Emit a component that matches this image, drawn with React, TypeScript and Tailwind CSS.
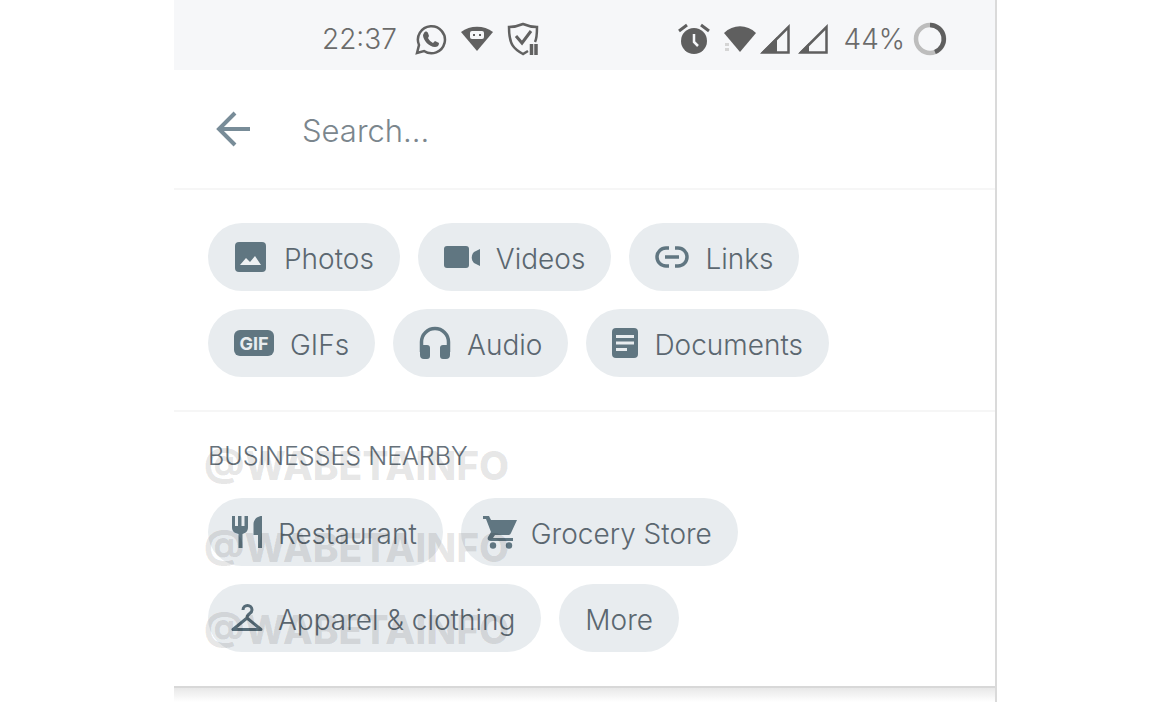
import type { ReactNode } from 'react';

function Chip({ label, icon, compact = false }: { label: string; icon?: ReactNode; compact?: boolean }) {
    return (
        <button
            type="button"
            className={`flex h-[68px] items-center rounded-full bg-[#e8ecef] pr-[26px] text-[28px] font-light whitespace-nowrap text-[#5b6770] ${compact ? 'gap-[14px] pl-[22px]' : 'gap-4 pl-[26px]'}`}
        >
            {icon}
            <span className="pt-[3px]">{label}</span>
        </button>
    );
}

function PhotoIcon() {
    return (
        <svg viewBox="0 0 34 32" className="h-8 w-[34px] shrink-0" fill="none">
            <rect x="1" y="1" width="31" height="30" rx="4" fill="#607681" />
            <path d="M6 24l6-7 4 4 5-6 6 9z" fill="#eef1f3" />
        </svg>
    );
}

function VideoIcon() {
    return (
        <svg viewBox="0 0 36 32" className="h-8 w-9 shrink-0" fill="#607681">
            <rect x="0" y="5" width="25" height="22" rx="3" />
            <path d="M36 8v17l-6-3c-3-3-3-8 0-11z" />
        </svg>
    );
}

function LinkIcon() {
    return (
        <svg viewBox="0 0 34 32" className="h-8 w-[34px] shrink-0" fill="none" stroke="#607681" strokeWidth="3.5">
            <path d="M14 7h-3a9 9 0 0 0 0 18h3M20 7h3a9 9 0 0 1 0 18h-3" />
            <path d="M10 16h14" />
        </svg>
    );
}

function GifIcon() {
    return (
        <span className="flex h-[26px] w-10 shrink-0 items-center justify-center rounded-md bg-[#607681] text-[18px] font-bold text-[#e8ecef]">
            GIF
        </span>
    );
}

function HeadphonesIcon() {
    return (
        <svg viewBox="0 0 32 34" className="h-[34px] w-8 shrink-0" fill="#607681">
            <path d="M2.500 26V16a13.500 13.500 0 0 1 27 0v10" fill="none" stroke="#607681" strokeWidth="3.5" />
            <path d="M1 19h7a3 3 0 0 1 3 3v8a3 3 0 0 1-3 3H5a4 4 0 0 1-4-4zM31 19h-7a3 3 0 0 0-3 3v8a3 3 0 0 0 3 3h3a4 4 0 0 0 4-4z" />
        </svg>
    );
}

function DocumentIcon() {
    return (
        <svg viewBox="0 0 26 32" className="h-8 w-[26px] shrink-0" fill="none">
            <rect x="0" y="1" width="26" height="30" rx="4" fill="#607681" />
            <path d="M4 9.500h18M4 16h18M4 22.500h11" stroke="#e8ecef" strokeWidth="3" />
        </svg>
    );
}

function RestaurantIcon() {
    return (
        <svg viewBox="-2 0 34 34" className="size-[34px] shrink-0" fill="#607681">
            <path d="M0 1h3v10h3V1h3.500v10h3V1H16v11c0 4-2 6-5.500 7v14H6.500V19C2 18 0 16 0 12z" />
            <path d="M30 1v32h-4V20h-4.500V9c0-4 3.500-8 8.500-8z" />
        </svg>
    );
}

function CartIcon() {
    return (
        <svg viewBox="0 0 34 34" className="size-[34px] shrink-0" fill="#607681">
            <path d="M0 1h6l2 4h26l-6 13c-1 2-2 2-3 2H12l-2 3h20v3H8c-3 0-4-2-3-4l3-5L3 4H0z" />
            <circle cx="10" cy="30.500" r="3.200" />
            <circle cx="26" cy="30.500" r="3.200" />
        </svg>
    );
}

function HangerIcon() {
    return (
        <svg viewBox="-1 0 34 28" className="h-7 w-[34px] shrink-0" fill="none" stroke="#566b77" strokeWidth="3" strokeLinejoin="round">
            <path d="M12 6c0-6 9-6 9 0 0 4-5 3-5 8L2 25.500h28L16 14" />
        </svg>
    );
}

function StatusBar() {
    return (
        <div className="flex h-[70px] items-center justify-between bg-[#f6f7f9] pt-2 pr-12 pl-[148px] text-[28px] font-light text-[#6b6b6b]">
            <div className="flex items-center gap-[14px]">
                <span className="pr-1">22:37</span>
                <svg viewBox="0 0 32 32" className="size-8" fill="none" stroke="#616161" strokeWidth="2.5">
                    <path d="M2 30l2-8a13.500 13.500 0 1 1 5 6z" />
                    <path d="M9 10c1-2 3-2 4 0l1 3-1 2c1 2 3 4 5 5l2-2 4 2c0 3-2 4-4 4-6 0-12-7-12-12z" fill="#616161" stroke="none" />
                </svg>
                <svg viewBox="0 0 32 26" className="h-[26px] w-8" fill="#616161">
                    <path d="M0 6C9-1 23-1 32 6L16 25z" />
                    <rect x="9" y="5" width="14" height="8" rx="2" fill="#f6f7f9" />
                    <path d="M12 8h2v2h-2zM18 8h2v2h-2z" />
                </svg>
                <svg viewBox="0 0 32 34" className="h-[34px] w-8" fill="none" stroke="#616161" strokeWidth="2.5">
                    <path d="M21 29l-5 3C7 27 2 23 2 5q7 0 14-3 7 3 14 3c0 6 0 11-2 15" />
                    <path d="M9 14l6 7 9-12" strokeWidth="3" />
                    <path d="M24.500 22v11M29 22v11" strokeWidth="3.5" />
                </svg>
            </div>
            <div className="flex items-center">
                <svg viewBox="0 0 32 32" className="mr-[14px] size-8" fill="#5f5f5f">
                    <circle cx="16" cy="18" r="13" />
                    <path d="M1 8l8-6M31 8l-8-6" stroke="#5f5f5f" strokeWidth="3" />
                    <path d="M16 11v8l4 4" fill="none" stroke="#f6f7f9" strokeWidth="2.5" />
                </svg>
                <svg viewBox="0 0 32 28" className="mr-1 h-7 w-8" fill="#5f5f5f">
                    <path d="M0 8C9-1 23-1 32 8L16 27z" />
                    <path d="M1 18h4v3H1zM1 23h4v3H1z" fill="#d5d5d5" />
                </svg>
                <svg viewBox="0 0 30 30" className="mr-2 size-[30px]" fill="none">
                    <path d="M3 28.500L28.500 3v25.500z" stroke="#5f5f5f" strokeWidth="2.5" />
                    <path d="M1 29l16-16v16z" fill="#5f5f5f" />
                </svg>
                <svg viewBox="0 0 30 30" className="mr-4 size-[30px]" fill="none">
                    <path d="M3 28.500L28.500 3v25.500z" stroke="#5f5f5f" strokeWidth="2.5" />
                    <path d="M1 29l10-10v10z" fill="#5f5f5f" />
                </svg>
                <span className="mr-2">44%</span>
                <svg viewBox="0 0 34 34" className="size-[34px]" fill="none" strokeWidth="4.5">
                    <circle cx="17" cy="17" r="14" stroke="#bdbdbd" />
                    <path d="M17 3a14 14 0 0 1 5 27" stroke="#5f5f5f" />
                </svg>
            </div>
        </div>
    );
}

function Watermark() {
    return (
        <div aria-hidden="true" className="pointer-events-none absolute top-[30px] left-[30px] text-[39px] font-extrabold text-black/10">
            <p className="h-[82px] leading-[48px]">@WABETAINFO</p>
            <p className="h-[82px] leading-[48px]">@WABETAINFO</p>
            <p className="h-[82px] leading-[48px]">@WABETAINFO</p>
        </div>
    );
}

export default function App() {
    return (
        <div className="min-h-screen bg-white pr-[173px] pl-[174px] font-['Inter','Liberation_Sans',sans-serif]">
            <main className="flex min-h-screen flex-col border-r-2 border-[#dadada]">
                <StatusBar />
                <header className="flex h-30 items-center border-b-2 border-[#f6f6f6] pl-[42px]">
                    <button type="button" aria-label="Back">
                        <svg viewBox="0 0 36 36" className="size-9" fill="none" stroke="#788c98" strokeWidth="4">
                            <path d="M34 18H4M19 2L3 18l16 16" />
                        </svg>
                    </button>
                    <input
                        type="text"
                        aria-label="Search"
                        placeholder="Search..."
                        className="ml-[50px] min-w-0 flex-1 pt-1 text-[31px] font-light outline-none placeholder:text-[#7b868d]"
                    />
                </header>
                <section className="flex flex-wrap gap-[18px] border-b-2 border-[#f6f6f6] px-[34px] py-[33px]">
                    <Chip label="Photos" icon={<PhotoIcon />} />
                    <Chip label="Videos" icon={<VideoIcon />} />
                    <Chip label="Links" icon={<LinkIcon />} />
                    <Chip label="GIFs" icon={<GifIcon />} />
                    <Chip label="Audio" icon={<HeadphonesIcon />} />
                    <Chip label="Documents" icon={<DocumentIcon />} />
                </section>
                <section className="relative px-[34px] pt-7 pb-[34px]">
                    <h2 className="mb-[26px] text-[25px] leading-8 font-light text-[#66717a]">BUSINESSES NEARBY</h2>
                    <div className="flex flex-wrap gap-[18px]">
                        <Chip label="Restaurant" icon={<RestaurantIcon />} compact />
                        <Chip label="Grocery Store" icon={<CartIcon />} compact />
                        <Chip label="Apparel & clothing" icon={<HangerIcon />} compact />
                        <Chip label="More" />
                    </div>
                    <Watermark />
                </section>
                <div className="flex-1 border-t-2 border-[#d8d8d8] bg-linear-to-b from-[#e8e8e8] to-white" />
            </main>
        </div>
    );
}
